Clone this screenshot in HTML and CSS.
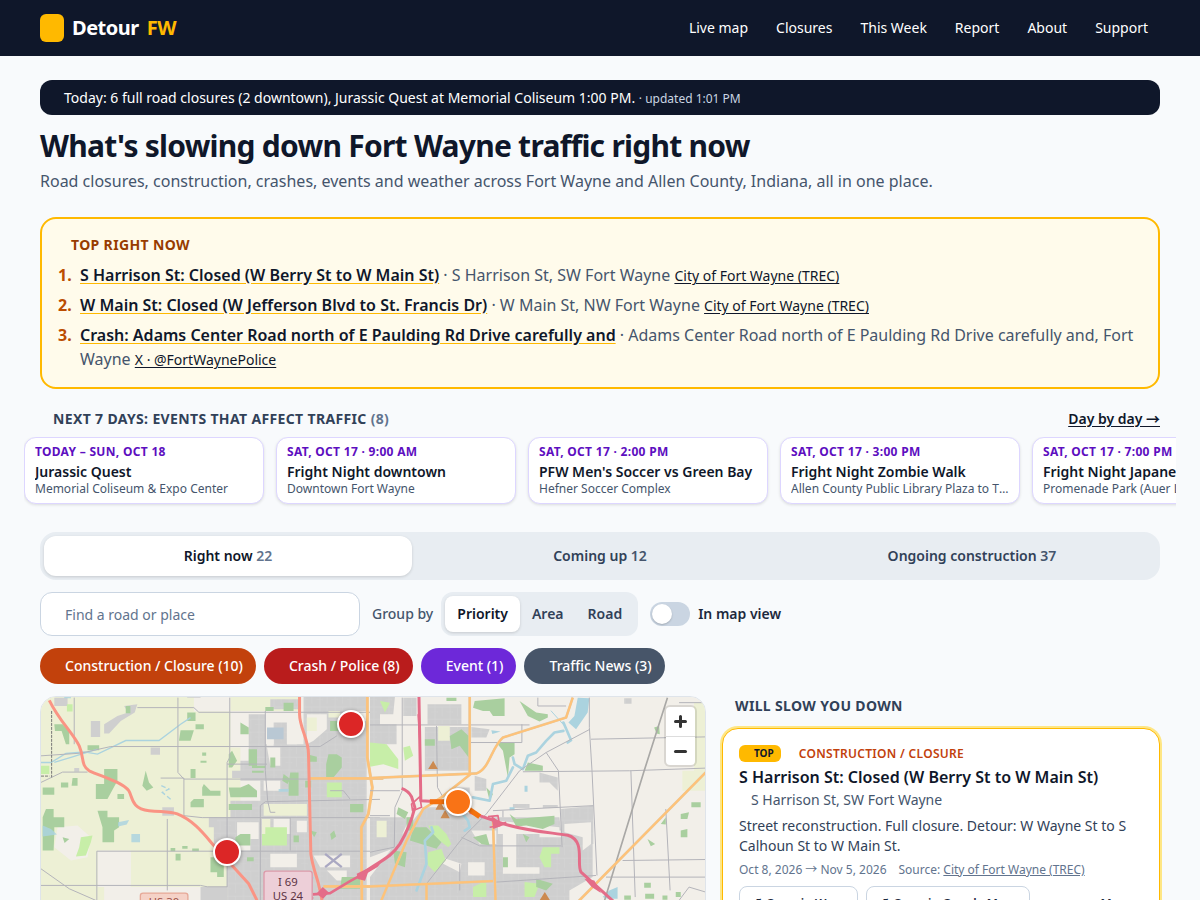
FILE: index.html
```html
<!DOCTYPE html>
<html lang="en">
<head>
<meta charset="utf-8">
<meta name="viewport" content="width=device-width, initial-scale=1">
<title>Detour FW</title>
<link rel="stylesheet" href="styles.css">
</head>
<body>
<header class="site-header">
  <div class="wrap header-row">
    <a class="brand" href="#"><span class="brand-mark"></span><span>Detour</span><span class="brand-accent">FW</span></a>
    <nav class="nav">
      <a href="#map">Live map</a><a href="#closures">Closures</a><a href="#week">This Week</a><a href="#report">Report</a><a href="#about">About</a><a href="#support">Support</a>
    </nav>
  </div>
</header>
<main class="wrap main">
  <p class="today">Today: 6 full road closures (2 downtown), Jurassic Quest at Memorial Coliseum 1:00 PM. <span class="updated">· updated 1:01 PM</span></p>
  <h1 class="title">What's slowing down Fort Wayne traffic right now</h1>
  <p class="lede">Road closures, construction, crashes, events and weather across Fort Wayne and Allen County, Indiana, all in one place.</p>

  <section class="top-box">
    <h2 class="label top-label">TOP RIGHT NOW</h2>
    <ol class="top-list">
      <li><span class="num">1.</span><div><a class="top-link" href="#c1">S Harrison St: Closed (W Berry St to W Main St)</a> · S Harrison St, SW Fort Wayne <a class="src" href="#trec">City of Fort Wayne (TREC)</a></div></li>
      <li><span class="num">2.</span><div><a class="top-link" href="#c2">W Main St: Closed (W Jefferson Blvd to St. Francis Dr)</a> · W Main St, NW Fort Wayne <a class="src" href="#trec">City of Fort Wayne (TREC)</a></div></li>
      <li><span class="num">3.</span><div><a class="top-link" href="#c3">Crash: Adams Center Road north of E Paulding Rd Drive carefully and</a> · Adams Center Road north of E Paulding Rd Drive carefully and, Fort Wayne <a class="src" href="#fwpd">X · @FortWaynePolice</a></div></li>
    </ol>
  </section>

  <section class="events" id="week">
    <div class="events-head">
      <h2 class="label">NEXT 7 DAYS: EVENTS THAT AFFECT TRAFFIC <span class="muted">(8)</span></h2>
      <a class="day-link" href="#days">Day by day →</a>
    </div>
    <div class="strip">
      <a class="event" href="#e1"><span class="when">TODAY – SUN, OCT 18</span><span class="what">Jurassic Quest</span><span class="where">Memorial Coliseum &amp; Expo Center</span></a>
      <a class="event" href="#e2"><span class="when">SAT, OCT 17 · 9:00 AM</span><span class="what">Fright Night downtown</span><span class="where">Downtown Fort Wayne</span></a>
      <a class="event" href="#e3"><span class="when">SAT, OCT 17 · 2:00 PM</span><span class="what">PFW Men's Soccer vs Green Bay</span><span class="where">Hefner Soccer Complex</span></a>
      <a class="event" href="#e4"><span class="when">SAT, OCT 17 · 3:00 PM</span><span class="what">Fright Night Zombie Walk</span><span class="where">Allen County Public Library Plaza to The Landing</span></a>
      <a class="event" href="#e5"><span class="when">SAT, OCT 17 · 7:00 PM</span><span class="what">Fright Night Japanese Show</span><span class="where">Promenade Park (Auer Lawn)</span></a>
    </div>
  </section>

  <div class="tabs">
    <button class="tab active" type="button">Right now <span class="count">22</span></button>
    <button class="tab" type="button">Coming up <span class="count">12</span></button>
    <button class="tab" type="button">Ongoing construction <span class="count">37</span></button>
  </div>

  <div class="controls">
    <input class="search" type="search" placeholder="Find a road or place" aria-label="Find a road or place">
    <div class="group">
      <span class="group-label">Group by</span>
      <div class="segment">
        <button class="seg active" type="button">Priority</button><button class="seg" type="button">Area</button><button class="seg" type="button">Road</button>
      </div>
    </div>
    <label class="switch-label" for="in-view"><input class="switch" type="checkbox" role="switch" id="in-view">In map view</label>
  </div>

  <div class="pills">
    <button class="pill orange" type="button">Construction / Closure (10)</button>
    <button class="pill red" type="button">Crash / Police (8)</button>
    <button class="pill violet" type="button">Event (1)</button>
    <button class="pill slate" type="button">Traffic News (3)</button>
  </div>

  <div class="columns">
    <section class="map" id="map" aria-label="Traffic map">
      <svg class="map-art" viewBox="0 0 666 560" preserveAspectRatio="xMinYMin slice" aria-hidden="true">
        <defs>
          <pattern id="streets" width="46" height="38" patternUnits="userSpaceOnUse">
            <rect width="46" height="38" fill="#cfcfcf"/>
            <path d="M0 10H46M0 25H20M12 0V38M33 10V38" stroke="#d4d4d4" stroke-width="2"/>
          </pattern>
        </defs>
        <rect width="666" height="560" fill="#f2efe9"/>
        <g transform="translate(0 -6) scale(.33333)">
          <path fill="#edf0d5" d="M0 0H460V62H570V170H600V400H670V630H560V590H270V480H170V590H190V1700H0ZM570 0H780V60H570ZM680 340H800V380H680Z"/>
          <path fill="#f2efe9" d="M50 410L110 405 150 440 140 500 90 510 40 470ZM175 485H270V585H175ZM575 65H635V165H575Z"/>
          <g fill="#cfcfcf">
            <path fill="url(#streets)" d="M625 70H675V160H700V95H740V160H790V18H980V1700H560V480H520V380H570V330H660V270H600V210H625ZM690 25H775V55H690Z"/>
            <path d="M480 590H560V700H480ZM575 240H680V262H575ZM330 170H358V192H330ZM150 90H178V138H150ZM190 100L230 75 262 65 250 45 290 40 282 65 240 90 205 128H190ZM40 20H80V45H40ZM505 380H530V410H505ZM365 350H400V375H365ZM100 232H115V243H100ZM440 0H480V20H440Z"/>
          </g>
          <path fill="#f2efe9" d="M680 130H700V165H680ZM740 85H770V160H740ZM800 70H860V115L820 150 800 160ZM925 60H980V90H970ZM680 170H720V225H690ZM670 270H720V300H670ZM590 395H655V445H630V480H590ZM700 385H750V430H700ZM770 390H800V425H770ZM820 495H930V530H840ZM690 490H770V530H690ZM860 540H920V570H890Z"/>
          <path fill="#edf0d5" d="M670 340H800V375H670ZM800 80H830V120H800ZM865 60H900V80H865ZM665 385H690V430H665Z"/>
          <path fill="#c7eea8" d="M675 410H740V465H665V430H675ZM120 440L155 435 150 455 135 495 105 498 115 470ZM0 225H25V250H0ZM860 275H905V320H860ZM78 40H95V62H78Z"/>
          <g fill="#a9cf9f">
            <path d="M190 235H230V270L200 325H165V280H190ZM170 360H200V380H235V410L220 420V455H185V410ZM315 240L325 275 338 290 318 300 305 285ZM440 65H465V90H440ZM465 100H490V115H465ZM420 118H460L450 150H415ZM450 235H465V262H450ZM460 325H490V350H450V335ZM490 280L510 300H540V315H485V290ZM565 290H600L625 280 650 300V320H570ZM565 340H635V358H565ZM40 100H65L85 120V160H75L62 120H42ZM95 262H110V285H92ZM60 275H82V290H60ZM5 290H40V312H5ZM230 310H250V325H230ZM15 355H38V380H70V410H40V430L38 480H5V380ZM510 500H550V560H530V545H510ZM600 430H630V465H585V440ZM405 490H420V510H405ZM675 48H700V60H675ZM625 175H650V225H625ZM600 95L625 110V130H600ZM730 35H760V60H730ZM865 190H890L905 200V230L880 260H858V220ZM750 245H775V315H745V280ZM690 200H705V230H690ZM635 225H675V232H635ZM635 240H670V246H635ZM870 90H895V120H870ZM905 560H960V595H900ZM930 340H970V365H930ZM140 163H175V178H140ZM575 180L590 210 575 230H565V190Z"/>
            <path d="M800 190l30 8v15h-24zM795 270h18v20h-18zM730 250l20 15-8 15-16-10zM810 420l20 5-8 15zM870 430l12-10 6 18-14 10zM760 435h16v20h-16zM620 500h20v12h-20zM390 472h14v10h-14zM425 466h16v9h-16zM455 474h20v8h-20zM530 515h20v10h-20zM485 185h12v10h-12zM480 210h18v6h-18zM255 45h14v22h-14zM65 440l20 5-14 12z"/>
          </g>
          <path fill="#abd3df" d="M5 405L30 415 48 432 5 438ZM272 430H298V455H272ZM232 395L265 388 258 402 232 408ZM70 0H90V22H70ZM705 0H730V15H705ZM715 295H745V303H715Z" opacity=".85"/>
          <path fill="#b9c8d4" d="M680 110H730V145H680Z"/>
          <g fill="none" stroke="#abd3df" stroke-width="4">
            <path d="M0 215H30L75 188 130 183 170 190 255 149H355L420 100 450 80"/><path d="M40 215L90 200 170 175"/><path d="M362 285L385 295 365 305 395 330" stroke-dasharray="14 8"/><path d="M820 560L790 610"/>
          </g>
          <g fill="none" stroke="#b4b4ba" stroke-width="3">
            <path d="M0 275L65 244H140M100 20V160M290 50H460L475 64H1020M0 195L120 187 210 167H840L890 135M412 20V245L430 265H1020M360 262H430V375L485 381H1020M568 20V200L560 215V440M675 60V240L682 330 690 365H705M660 630V345L675 333 1020 326M380 385V600M168 630V482H520M590 482H1020M0 585H480L500 589H560M0 535L85 595 165 630M560 520V590M750 380V480M560 220H680M870 300H910L930 325"/>
          </g>
          <path d="M32 60V260M0 256H25" fill="none" stroke="#777" stroke-width="3" stroke-dasharray="9 3"/>
          <path d="M855 490L905 530M905 490L855 530" stroke="#aaa8c2" stroke-width="7" fill="none"/>
          <g fill="none" stroke-linejoin="round">
            <path stroke="#e2c9a2" stroke-width="9" d="M982 0V200L997 290 985 370 964 410 968 1000M810 263H1030M850 588H1030"/>
            <path stroke="#ffc278" stroke-width="7" d="M982 0V200L997 290 985 370 964 410 968 1000M810 263H1030M850 588H1030"/>
            <path stroke="#fa9484" stroke-width="9" d="M25 28C55 90 95 125 115 165C130 200 120 225 145 240C190 260 245 275 264 300C275 315 270 355 325 360C370 364 390 362 410 370C460 390 490 430 520 465L625 580 650 630M778 0V70C778 110 805 145 805 190L812 490C820 550 840 570 848 650"/>
            <path stroke="#e46c88" stroke-width="8" d="M818 612L870 608 930 572 970 550 1025 518M818 620L750 680"/>
          </g>
          <path fill="#e46c88" d="M848 590l18 16-17 19-20-16zM950 550l52-26-18 22-9 25-22-5z"/>
          <rect x="671" y="542" width="145" height="120" rx="8" fill="#edcfd8" stroke="#dd9aaa" stroke-width="4"/>
          <rect x="299" y="608" width="143" height="60" rx="8" fill="#f5d2c7" stroke="#e6a998" stroke-width="4"/>
          <g class="map-text" text-anchor="middle"><text x="743" y="588">I 69</text><text x="743" y="630">US 24</text><text class="us30" x="370" y="648">US 30</text></g>
        </g>
        <g transform="translate(330 -6) scale(.33333)">
          <path fill="url(#streets)" d="M0 18H75L70 70H30V100H80V160H0ZM100 20H140V75H100ZM173 40H275V100H173ZM165 108H300V240H165ZM305 108L360 115 350 140H305ZM0 380H120L80 470 0 500ZM0 560L160 350 240 350 330 380V500L290 630 260 1700H0ZM290 380H570L580 460H670V560L600 600V630H260ZM575 355L672 345V460H575ZM240 290H300V320H240ZM510 245L565 260V300L540 275H510ZM430 340H480V352H430ZM520 343H565V352H520ZM765 22H787V38H765ZM315 255L350 265V300H315Z"/>
          <path fill="#f2efe9" d="M240 245H300V270L240 300ZM305 420H380V460H330ZM400 430H440V550H400ZM215 500L275 520 270 545 220 520ZM510 420H575V440H510ZM295 515H345V555H295ZM440 530H510V550H440ZM385 390L570 410V430H385ZM585 400L665 395V460L640 480 640 440 585 425Z"/>
          <path fill="#edf0d5" d="M975 35H1010V300H940V240H975ZM205 105H240V150H205ZM20 390H50V440H20Z"/>
          <path fill="#c7eea8" d="M0 155L50 160 85 205V235L40 220 0 228ZM100 170L120 165 130 195 105 210ZM175 405H205L230 430 245 460 235 470 190 435ZM175 485L215 475 228 510 195 545 170 520ZM520 470H570V490H545V530H525L510 500ZM30 30L60 35 45 65ZM330 580L350 570 350 620H310V590ZM465 575L510 580 495 620H465Z"/>
          <g fill="#a9cf9f">
            <path d="M315 30L405 22V75H370L360 60H340L310 50ZM450 30L500 65 535 70V80L510 92 475 75ZM240 135L275 115 297 135V200L270 165 245 175ZM380 155H435V190L420 200 415 260 400 180ZM475 215L520 225V240H465ZM165 145H195V165H165ZM420 370L440 385 500 380 555 375V400L520 415 470 405 440 408ZM130 410H170L215 455 200 475 120 450ZM310 440L350 430 360 465 335 460ZM85 350L115 365 105 385 80 370ZM350 290L370 310 360 330ZM70 480L110 485 105 530 75 520ZM230 20H260V30H230ZM110 380H130V420H110ZM500 565L550 580 530 600 500 590ZM400 500H415V530H400ZM460 430L480 440 470 455Z"/>
            <path d="M967 335H995V350H967ZM935 370L960 365 955 385H935ZM935 420L955 415V440H935ZM875 400L890 380V402ZM835 445L858 460 845 467ZM855 110L870 105 872 130 862 128ZM828 610H855V625H828ZM825 577H845V592H825ZM880 615H895V628H880ZM765 615H785V628H765ZM920 605H935V620H920Z"/>
          </g>
          <g fill="none" stroke="#abd3df" stroke-width="8" stroke-linecap="round" stroke-linejoin="round">
            <path d="M582 95L605 148 595 155M582 120L555 125 530 150 500 185 475 195 460 235 435 220 430 200M430 230L410 270 370 280 360 330 310 320M270 360L295 390 300 410 285 420M185 410L190 425 165 450 170 520 140 600"/>
            <path d="M545 60L590 110" stroke-width="3"/>
          </g>
          <path fill="#abd3df" d="M625 20L660 22 655 65 620 115 597 95 615 75ZM700 620L720 600 745 590V625H715ZM465 285h9v18h-9zM365 118l28 4-25 7zM420 350h15v9h-15z"/>
          <g fill="none" stroke="#b4b4ba" stroke-width="3">
            <path d="M97 20V300L75 350 73 470 0 485M0 102H480M505 20V45H590M300 155H457V100M660 20V110L668 240 683 555M665 145L1010 138M1010 35H930M780 240L1010 232M785 240L798 620M890 355L903 600M370 360L672 345M760 510L1010 507M710 560H1010M170 580L280 440 350 370 450 240 530 185 662 115M530 185L567 240 578 470M460 243L780 240M275 440L330 466H575M200 105L203 290 220 320M270 520V600M380 575L680 555M400 360V380M930 630L960 590 1010 605M60 375H0M0 300H90"/>
          </g>
          <path d="M895 20L825 240 745 500 706 630" fill="none" stroke="#a9a8a6" stroke-width="5"/>
          <g fill="none" stroke-linejoin="round">
            <path stroke="#e2c9a2" stroke-width="8" d="M300 0V245M0 262L320 248C360 235 365 170 400 140L590 80 610 20M305 248L215 320 160 355 110 450 30 640M370 390L378 640M0 588L370 572M170 580V640M1010 245L620 640"/>
            <path stroke="#ffc278" stroke-width="6" d="M300 0V245M0 262L320 248C360 235 365 170 400 140L590 80 610 20M305 248L215 320 160 355 110 450 30 640M370 390L378 640M0 588L370 572M170 580V640M1010 245L620 640"/>
            <path stroke="#e46c88" stroke-width="9" d="M147 0L153 330 180 332H240M300 365L380 392C450 420 540 425 595 434C650 450 620 520 635 545L740 640M95 293Q115 300 125 318L135 350Q120 410 90 460C60 505 30 510 -20 548"/>
            <path stroke="#e46c88" stroke-width="5" d="M125 340L150 318 155 350 128 360ZM355 378L385 375 390 405 360 410M145 70L150 150M375 405L410 395"/>
          </g>
          <path fill="#e46c88" d="M645 565l30 5 20 38-28-18zM365 375l38 28-32 12z"/>
          <g fill="#cc8a50"><path d="M175 235L190 210 204 235ZM212 383L226 358 240 383ZM197 357L211 332 225 357ZM508 633L526 605 544 633Z"/></g>
          <path d="M180 333H240M290 350L330 378" fill="none" stroke="#f4720e" stroke-width="15"/>
        </g>
      </svg>
      <button class="pin pin-a" type="button" aria-label="Crash"></button>
      <button class="pin pin-b" type="button" aria-label="Crash"></button>
      <button class="pin pin-c" type="button" aria-label="Construction"></button>
      <div class="zoom">
        <button type="button" aria-label="Zoom in"><svg width="29" height="29" viewBox="0 0 29 29"><path d="M14.500 9.500v10M9.500 14.500h10" stroke="#333" stroke-width="3" stroke-linecap="round"/></svg></button>
        <button type="button" aria-label="Zoom out"><svg width="29" height="29" viewBox="0 0 29 29"><path d="M9.500 14.500h10" stroke="#333" stroke-width="3" stroke-linecap="round"/></svg></button>
      </div>
    </section>

    <section class="list" id="closures">
      <h2 class="label">WILL SLOW YOU DOWN</h2>
      <article class="card">
        <div class="card-tags"><span class="badge">TOP</span><span class="kind">CONSTRUCTION / CLOSURE</span></div>
        <h3 class="card-title">S Harrison St: Closed (W Berry St to W Main St)</h3>
        <p class="card-place">S Harrison St, SW Fort Wayne</p>
        <p class="card-text">Street reconstruction. Full closure. Detour: W Wayne St to S Calhoun St to W Main St.</p>
        <p class="card-meta"><span>Oct 8, 2026 → Nov 5, 2026</span><span>Source: <a href="#trec">City of Fort Wayne (TREC)</a></span></p>
        <div class="card-actions">
          <a class="act" href="#waze">↗ Open in Waze</a>
          <a class="act" href="#gmaps">↗ Open in Google Maps</a>
          <button class="more" type="button">More</button>
        </div>
      </article>
    </section>
  </div>
</main>
</body>
</html>
```
FILE: styles.css
```css
* { box-sizing: border-box; }
body { margin: 0; background: #f8fafc; color: #0f172a; font: 16px/24px "Noto Sans", "Noto Sans CJK JP", sans-serif; }
h1, h2, h3, p, ol { margin: 0; padding: 0; }
a { color: inherit; }
button { font: inherit; color: inherit; border: 0; padding: 0; cursor: pointer; }

.wrap { max-width: 1152px; margin: 0 auto; padding: 0 16px; }
.site-header { background: #0f172a; color: #fff; }
.header-row { display: flex; align-items: center; justify-content: space-between; min-height: 56px; }
.brand { display: flex; align-items: center; gap: 8px; font-size: 20px; line-height: 28px; font-weight: 700; letter-spacing: -0.025em; text-decoration: none; }
.brand-mark { width: 24px; height: 28px; border-radius: 6px; background: #ffb900; }
.brand-accent { color: #ffb900; }
.nav { display: flex; gap: 4px; font-size: 14px; line-height: 20px; }
.nav a { padding: 8px 12px; text-decoration: none; }

.main { padding-top: 24px; padding-bottom: 32px; }
.today { padding: 8px 24px 7px; border-radius: 12px; background: #0f172a; color: #fff; font-size: 14px; line-height: 20px; }
.updated { font-size: 12px; line-height: 16px; color: #cad5e2; }
.title { margin-top: 12px; font-size: 30px; line-height: 38px; font-weight: 700; letter-spacing: -0.025em; }
.lede { margin-top: 4px; color: #45556c; }

.label { font-size: 14px; line-height: 20px; font-weight: 700; letter-spacing: 0.025em; color: #314158; padding-left: 13px; }
.top-box { margin-top: 24px; padding: 16px; border: 2px solid #ffb900; border-radius: 16px; background: #fffbeb; }
.top-label { color: #973c00; }
.top-list { list-style: none; margin-top: 8px; display: grid; gap: 6px; color: #45556c; }
.top-list li { display: grid; grid-template-columns: 14px minmax(0, 1fr); gap: 8px; }
.num { color: #bb4d00; font-weight: 700; }
.top-link { font-weight: 600; color: #0f172a; text-decoration-color: #ffb900; text-underline-offset: 2px; }
.src { font-size: 14px; line-height: 20px; color: #0f172a; text-underline-offset: 2px; }

.events { margin-top: 20px; }
.events-head { display: flex; justify-content: space-between; }
.muted { color: #62748e; }
.day-link { font-size: 14px; line-height: 20px; font-weight: 600; text-underline-offset: 2px; }
.strip { display: flex; gap: 12px; margin: 8px -16px 0; padding-bottom: 4px; overflow: hidden; }
.event { flex: 0 0 240px; min-width: 0; display: flex; flex-direction: column; padding: 6px 10px; border: 1px solid #ddd6ff; border-radius: 12px; background: #fff; box-shadow: 0 1px 3px rgb(0 0 0 / .12); text-decoration: none; }
.event span { white-space: nowrap; overflow: hidden; text-overflow: ellipsis; }
.when { font-size: 12px; line-height: 16px; font-weight: 700; letter-spacing: 0.025em; color: #5d0ec0; }
.what { margin-top: 2px; font-size: 14px; line-height: 19px; font-weight: 600; }
.where { font-size: 12px; line-height: 16px; color: #45556c; }

.tabs { margin-top: 24px; display: grid; grid-template-columns: repeat(3, 1fr); gap: 4px; padding: 4px; border-radius: 16px; background: #e8edf2; }
.tab { height: 40px; border-radius: 12px; background: none; font-size: 14px; font-weight: 600; color: #314158; }
.active { background: #fff; color: #0f172a; box-shadow: 0 1px 3px rgb(0 0 0 / .15); }
.count { color: #62748e; }
.tab:not(.active) .count { color: #45556c; }

.controls { margin-top: 12px; display: flex; flex-wrap: wrap; align-items: center; gap: 12px; font-size: 14px; line-height: 20px; }
.search { width: 320px; height: 44px; padding: 0 24px; border: 1px solid #cad5e2; border-radius: 12px; background: #fff; font: inherit; color: inherit; }
.search::placeholder { color: #62748e; opacity: 1; }
.group { display: flex; align-items: center; gap: 8px; }
.group-label { font-weight: 500; color: #45556c; }
.segment { display: flex; padding: 4px; border-radius: 12px; background: #e8edf2; }
.seg { height: 36px; padding: 0 12px; border-radius: 8px; background: none; font-weight: 600; color: #314158; }
.seg.active { background: #fff; color: #0f172a; }
.switch-label { display: flex; align-items: center; gap: 8px; font-weight: 600; color: #1d293d; }
.switch { appearance: none; width: 40px; height: 24px; margin: 0; padding: 2px; border-radius: 12px; background: #cad5e2; }
.switch::before { content: ""; display: block; width: 20px; height: 20px; border-radius: 50%; background: #fff; box-shadow: 0 1px 2px rgb(0 0 0 / .2); }
.switch:checked { background: #0f172a; }
.switch:checked::before { margin-left: 16px; }

.pills { margin-top: 12px; display: flex; flex-wrap: wrap; gap: 8px; }
.pill { height: 36px; padding: 0 13px 0 25px; border-radius: 18px; font-size: 14px; font-weight: 500; color: #fff; }
.orange { background: #c2410c; }
.red { background: #b91c1c; }
.violet { background: #6d28d9; }
.slate { background: #475569; }

.columns { margin-top: 12px; display: grid; grid-template-columns: minmax(0, 1fr) 438px; gap: 16px; align-items: start; }
.map { position: relative; height: 560px; overflow: hidden; border: 1px solid #dfe4ea; border-radius: 16px; }
.map-art { display: block; width: 100%; height: 100%; }
.map-text { font: 34px "Noto Sans", sans-serif; fill: #5c3344; }
.us30 { fill: #9c5048; }
.pin { position: absolute; width: 28px; height: 28px; border: 2px solid #fff; border-radius: 50%; background: #dc2626; box-shadow: 0 1px 4px rgb(0 0 0 / .4); }
.pin-a { left: 296px; top: 13px; }
.pin-b { left: 172px; top: 141px; }
.pin-c { left: 403px; top: 91px; background: #f97316; }
.zoom { position: absolute; top: 10px; right: 10px; width: 29px; border-radius: 4px; background: #fff; box-shadow: 0 0 0 2px rgb(0 0 0 / .1); overflow: hidden; }
.zoom button { display: block; width: 29px; height: 29px; background: none; }
.zoom button + button { border-top: 1px solid #ddd; }
.zoom svg { display: block; }

.card { margin-top: 12px; padding: 16px; border: 1px solid #ffb900; border-radius: 16px; background: #fff; box-shadow: 0 0 0 2px #fee685; }
.card-tags { display: flex; align-items: center; gap: 18px; font-size: 12px; line-height: 16px; font-weight: 600; }
.badge { padding: 0 7px 0 15px; border-radius: 6px; background: #ffb900; font-size: 10px; line-height: 17px; font-weight: 700; }
.kind { color: #c2410c; letter-spacing: 0.025em; }
.card-title { margin-top: 3px; font-size: 16px; line-height: 24px; font-weight: 600; }
.card-place { padding-left: 12px; margin-top: 1px; font-size: 14px; line-height: 20px; color: #45556c; }
.card-text { margin-top: 6px; font-size: 14px; line-height: 20px; color: #314158; }
.card-meta { margin-top: 6px; display: flex; flex-wrap: wrap; gap: 12px; font-size: 12px; line-height: 16px; color: #62748e; }
.card-actions { margin-top: 8px; display: flex; align-items: center; gap: 8px; font-size: 12px; line-height: 16px; font-weight: 600; color: #1d293d; }
.act { padding: 9px 11px; border: 1px solid #cad5e2; border-radius: 8px; text-decoration: none; }
.more { padding-right: 12px; margin-left: auto; background: none; }

@media (max-width: 900px) {
  .columns { grid-template-columns: minmax(0, 1fr); }
  .header-row { flex-wrap: wrap; }
  .nav { flex-wrap: wrap; }
}
```
